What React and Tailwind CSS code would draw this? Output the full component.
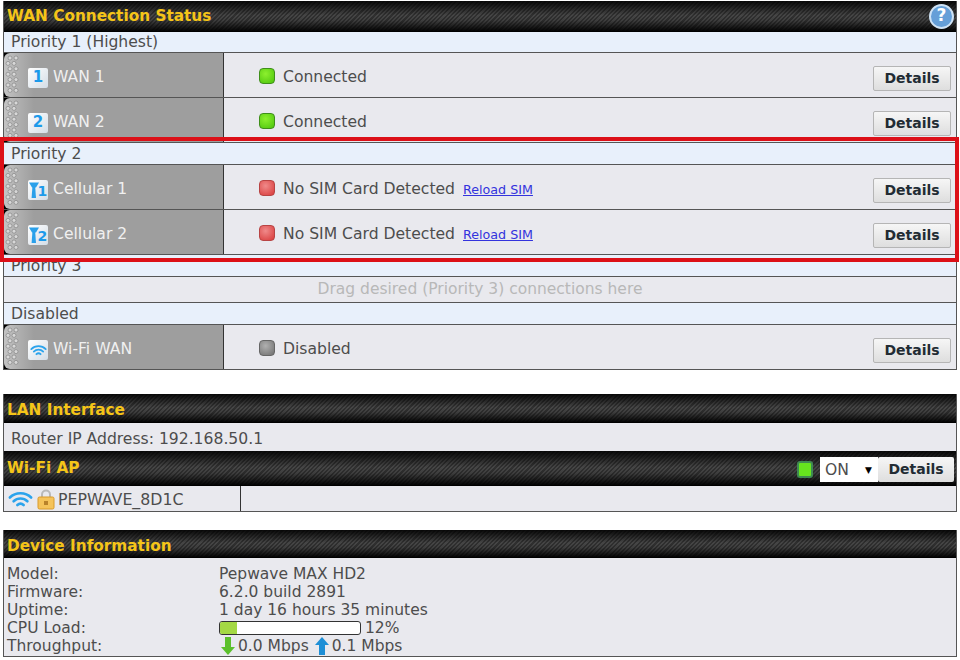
import React from 'react';

const barClass =
  'bg-[linear-gradient(180deg,rgba(0,0,0,0.9)_0%,rgba(0,0,0,0.2)_48%,rgba(0,0,0,0.3)_65%,rgba(0,0,0,0.95)_100%),repeating-linear-gradient(135deg,#585858_0px,#585858_1.5px,#3c3c3c_1.5px,#3c3c3c_3px)]';

function Bar({ title, className, textClass = '', children }) {
  return (
    <div className={`flex items-center justify-between border-b border-black pl-[3px] ${barClass} ${className}`}>
      <span className={`text-[15.3px] font-bold text-[#f5c518] ${textClass}`}>{title}</span>
      {children}
    </div>
  );
}

function Grip() {
  const dots = [];
  for (let i = 0; i < 7; i++) {
    dots.push(<circle key={'a' + i} cx={i % 2 ? 3 : 5} cy={5 + i * 5.4} r="2" fill="#d8d8d8" stroke="#7c7c7c" strokeWidth="0.6" />);
    dots.push(<circle key={'b' + i} cx={i % 2 ? 9 : 11} cy={5 + i * 5.4} r="2" fill="#d8d8d8" stroke="#7c7c7c" strokeWidth="0.6" />);
  }
  return (
    <svg width="14" height="44" className="shrink-0 ml-[1px]">
      {dots}
    </svg>
  );
}

function NumIcon({ n }) {
  return (
    <span className="w-[20px] h-[20px] rounded-[2px] bg-gradient-to-br from-white to-[#d4dde6] flex items-center justify-center text-[#1c9aea] text-[15px] font-bold leading-none">
      {n}
    </span>
  );
}

function CellIcon({ n }) {
  return (
    <span className="w-[20px] h-[20px] rounded-[2px] bg-gradient-to-br from-white to-[#d4dde6] flex items-center justify-center">
      <svg width="20" height="20" viewBox="0 0 20 20">
        <path d="M1 2.5h10l-3 5h-4z" fill="#2aa0ea" />
        <path d="M4.4 7h2.8l.8 11h-4.4z" fill="#2aa0ea" />
        <text x="9.5" y="16" fontSize="14" fontWeight="700" fill="#1c9aea" fontFamily="DejaVu Sans, sans-serif">{n}</text>
      </svg>
    </span>
  );
}

function WifiArcs({ size = 19 }) {
  return (
    <svg width={size} height={size * 0.7} viewBox="0 0 20 14" fill="none" stroke="#2ba3ec" strokeLinecap="round">
      <path d="M1.5 6C6 1.5 14 1.5 18.5 6" strokeWidth="2.1" />
      <path d="M4.5 9C7.5 6 12.5 6 15.5 9" strokeWidth="2.1" />
      <path d="M7.5 12C9 10.6 11 10.6 12.5 12" strokeWidth="2.1" />
    </svg>
  );
}

function WifiIcon() {
  return (
    <span className="w-[20px] h-[20px] rounded-[2px] bg-gradient-to-br from-white to-[#d4dde6] flex items-center justify-center">
      <WifiArcs size={17} />
    </span>
  );
}

function Led({ color }) {
  const colors = {
    green: 'bg-[radial-gradient(circle_at_40%_35%,#8df02e,#4cc40c)] border-[#3f8f1a]',
    red: 'bg-[radial-gradient(circle_at_40%_35%,#f08a8a,#d83a3a)] border-[#b84444]',
    gray: 'bg-[radial-gradient(circle_at_40%_35%,#b0b0b0,#6f6f6f)] border-[#666666]',
  };
  return <span className={`mb-[4px] w-[16px] h-[16px] rounded-[4px] border ${colors[color]}`} />;
}

function DetailsBtn({ className = '' }) {
  return (
    <button className={`h-[25px] w-[78px] rounded-[2px] border border-[#b5b5b5] bg-gradient-to-b from-[#f6f6f6] to-[#dedede] text-[14px] font-bold text-[#222b33] ${className}`}>
      Details
    </button>
  );
}

function PriorityRow({ label, h }) {
  return (
    <div className={`flex items-center border-b border-[#555555] bg-[#e8f0fb] pl-[7px] pt-[2px] text-[15.6px] text-[#4d4d4d] ${h}`}>
      {label}
    </div>
  );
}

function WanRow({ icon, name, led, status, reload, h = 'h-[45px]' }) {
  return (
    <div className={`flex border-b border-[#555555] ${h}`}>
      <div className="w-[220px] shrink-0 border-r border-[#333333] bg-black">
        <div className="h-full flex items-center rounded-l-[6px] bg-[linear-gradient(90deg,#c4c4c4_0px,#b0b0b0_14px,#9e9e9e_30px,#9e9e9e_100%)]">
          <Grip />
          <span className="ml-[9px] pt-[6px] flex items-center gap-[5px] text-[15.6px] text-[#f0f0f0]">
            {icon}
            {name}
          </span>
        </div>
      </div>
      <div className="flex-1 flex items-center bg-[#e9e9ee] pl-[35px] pr-[5px] pt-[6px]">
        <Led color={led} />
        <span className="ml-[8px] text-[15.6px] text-[#4d4d4d]">{status}</span>
        {reload && <a className="ml-[8px] text-[12.7px] text-[#3333dd] underline">Reload SIM</a>}
        <DetailsBtn className="ml-auto" />
      </div>
    </div>
  );
}

function Sep({ h }) {
  return <div className={h} />;
}

export default function App() {
  return (
    <div className="relative w-[960px] h-[660px] overflow-hidden bg-white font-['DejaVu_Sans',Verdana,sans-serif]">
      <div className="flex flex-col pl-[3px] pr-[3px] pt-[1px]">
        {/* WAN */}
        <div className="border-x border-[#555555]">
          <Bar title="WAN Connection Status" className="h-[31px]">
            <span className="mr-[2px] w-[25px] h-[25px] rounded-full border-2 border-[#cfe3f5] bg-[#659fd8] flex items-center justify-center text-white text-[17px] font-bold">?</span>
          </Bar>
          <PriorityRow label="Priority 1 (Highest)" h="h-[21px]" />
          <WanRow icon={<NumIcon n="1" />} name="WAN 1" led="green" status="Connected" />
          <WanRow icon={<NumIcon n="2" />} name="WAN 2" led="green" status="Connected" />
          <PriorityRow label="Priority 2" h="h-[22px]" />
          <WanRow icon={<CellIcon n="1" />} name="Cellular 1" led="red" status="No SIM Card Detected" reload />
          <WanRow icon={<CellIcon n="2" />} name="Cellular 2" led="red" status="No SIM Card Detected" reload />
          <PriorityRow label="Priority 3" h="h-[22px]" />
          <div className="h-[26px] flex items-center justify-center border-b border-[#555555] bg-[#e9e9ee] text-[15.5px] text-[#b8b8b8]">
            Drag desired (Priority 3) connections here
          </div>
          <PriorityRow label="Disabled" h="h-[22px]" />
          <WanRow icon={<WifiIcon />} name="Wi-Fi WAN" led="gray" status="Disabled" />
        </div>

        <Sep h="h-[24px]" />

        {/* LAN */}
        <div className="border-x border-b border-[#555555]">
          <Bar title="LAN Interface" className="h-[29px]" textClass="pt-[4px]" />
          <div className="h-[28px] flex items-center bg-[#e9e9ee] pl-[7px] pt-[6px] text-[15.6px] text-[#4d4d4d]">
            Router IP Address: 192.168.50.1
          </div>
          <Bar title="Wi-Fi AP" className="h-[35px]">
            <div className="flex items-center mr-[2px] pt-[2px]">
              <span className="w-[16px] h-[17px] rounded-[3px] bg-[#66e51e] border-2 border-[#3f8a52]" />
              <div className="ml-[7px] w-[58px] h-[25px] bg-white flex items-center justify-between pl-[5px] pr-[6px] pt-[3px] text-[15.6px] text-[#4d4d4d]">
                ON
                <span className="text-[9px] text-black">▼</span>
              </div>
              <DetailsBtn className="!w-[76px] !border-0" />
            </div>
          </Bar>
          <div className="h-[25px] flex bg-[#e9e9ee]">
            <div className="w-[237px] shrink-0 border-r border-[#333333] flex items-center pl-[4px] text-[15.8px] text-[#4d4d4d]">
              <WifiArcs size={25} />
              <svg width="18" height="22" viewBox="0 0 18 22" className="ml-[4px]">
                <path d="M5 10V6.5a4 4 0 0 1 8 0V10" fill="none" stroke="#b9b9b9" strokeWidth="2" />
                <rect x="1" y="9" width="16" height="12" rx="1.5" fill="#f5c35a" stroke="#d99a2b" />
                <rect x="7" y="13" width="4" height="4" fill="#b9822a" />
              </svg>
              <span className="ml-[3px] pt-[2px]">PEPWAVE_8D1C</span>
            </div>
          </div>
        </div>

        <Sep h="h-[18px]" />

        {/* Device */}
        <div className="border-x border-b border-[#555555]">
          <Bar title="Device Information" className="h-[28px]" textClass="pt-[6px]" />
          <div className="h-[98px] bg-[#e9e9ee] pl-[3px] pt-[7px] text-[15.5px] leading-[18px] text-[#4d4d4d] grid grid-cols-[212px_1fr] content-start">
            <div>Model:</div>
            <div>Pepwave MAX HD2</div>
            <div>Firmware:</div>
            <div>6.2.0 build 2891</div>
            <div>Uptime:</div>
            <div>1 day 16 hours 35 minutes</div>
            <div>CPU Load:</div>
            <div className="flex items-center">
              <div className="w-[142px] h-[14px] rounded-[3px] border border-[#333333] bg-white overflow-hidden">
                <div className="h-full bg-[#a4d944]" style={{ width: '12%' }} />
              </div>
              <span className="ml-[4px]">12%</span>
            </div>
            <div>Throughput:</div>
            <div className="flex items-center pl-[2px]">
              <svg width="14" height="18" viewBox="0 0 14 18">
                <path d="M4 0h6v10h4l-7 8-7-8h4z" fill="#5cc02c" />
              </svg>
              <span className="ml-[3px]">0.0 Mbps</span>
              <svg width="14" height="18" viewBox="0 0 14 18" className="ml-[6px]">
                <path d="M4 18h6V8h4L7 0 0 8h4z" fill="#1e8fd6" />
              </svg>
              <span className="ml-[3px]">0.1 Mbps</span>
            </div>
          </div>
        </div>
      </div>

      {/* red highlight box */}
      <div className="absolute left-0 top-[137px] w-[959px] h-[125px] border-[4px] border-[#dc1018]" />
    </div>
  );
}
